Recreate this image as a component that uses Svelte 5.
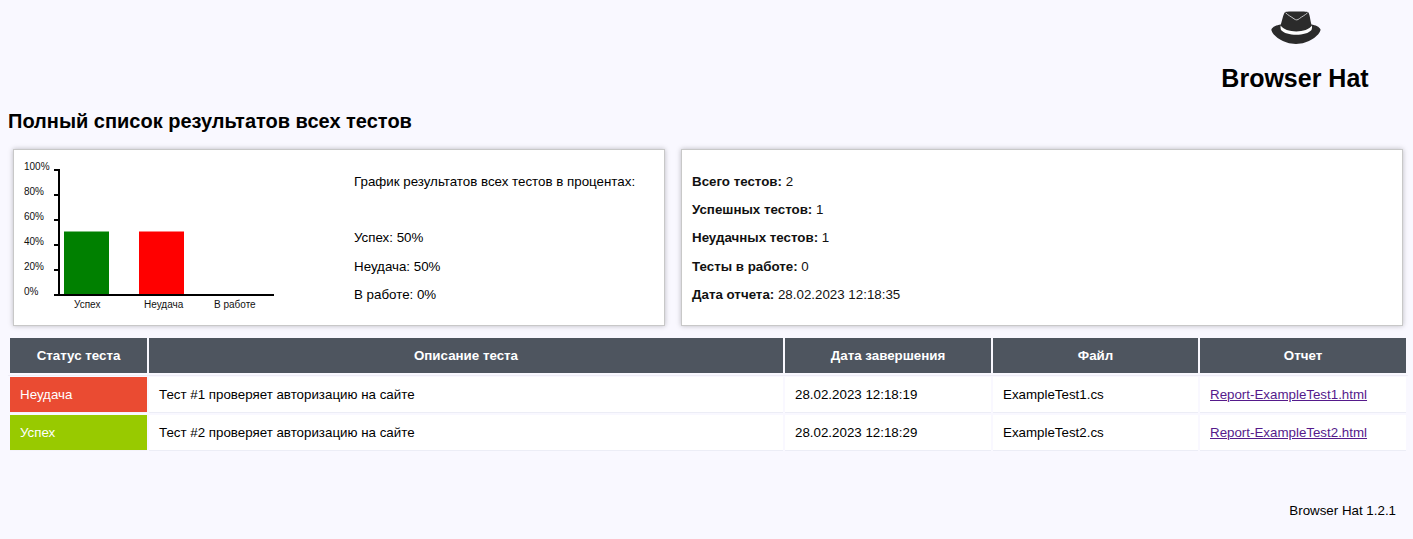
<script>
  const ticks = [100, 80, 60, 40, 20, 0];
  const bars = [
    { label: 'Успех', x: 50, tx: 60, value: 50, color: 'green' },
    { label: 'Неудача', x: 125, tx: 130, value: 50, color: 'red' },
    { label: 'В работе', x: 200, tx: 200, value: 0, color: 'gray' }
  ];
  const summary = [
    ['Всего тестов:', '2'],
    ['Успешных тестов:', '1'],
    ['Неудачных тестов:', '1'],
    ['Тесты в работе:', '0'],
    ['Дата отчета:', '28.02.2023 12:18:35']
  ];
  const columns = ['Статус теста', 'Описание теста', 'Дата завершения', 'Файл', 'Отчет'];
  const rows = [
    { ok: false, status: 'Неудача', text: 'Тест #1 проверяет авторизацию на сайте', date: '28.02.2023 12:18:19', file: 'ExampleTest1.cs', report: 'Report-ExampleTest1.html' },
    { ok: true, status: 'Успех', text: 'Тест #2 проверяет авторизацию на сайте', date: '28.02.2023 12:18:29', file: 'ExampleTest2.cs', report: 'Report-ExampleTest2.html' }
  ];
</script>

<div class="page">
  <header>
    <svg class="hat" width="50" height="34" viewBox="0 0 50 34">
      <path fill="#2b2b2b" d="M14 1.2C15.5 .2 20 .5 25.5 .5S35 .2 37.2 1.2C38.8 3 39 8 40.4 13.6C44.5 14.2 48.4 15.8 49.6 18.7C48.5 24.5 37.5 32.9 25 32.9C12.5 32.9 1.3 24.5 .3 18.7C1.6 15.8 5.5 14.2 9.8 13.6C11.6 8 12.2 3 14 1.2Z" />
      <path fill="#fff" d="M9.6 14.6C14.5 22.4 36 22.4 41 14.6C41.2 16.5 40.9 18 40.5 19C35.5 25.3 15 25.3 10 19C9.6 18 9.4 16.5 9.6 14.6Z" />
      <path fill="none" stroke="#c4c4c6" stroke-width="1" d="M14.6 1.8C17 4.3 20.5 5.8 23 7.8C25 9.3 26.5 9.3 28.5 7.5C30.5 5.8 34 4.3 36.6 1.8" />
    </svg>
    <h1>Browser Hat</h1>
  </header>

  <h2>Полный список результатов всех тестов</h2>

  <div class="panels">
    <section class="panel chart-panel">
      <svg class="chart" width="330" height="155" viewBox="0 0 330 155">
        {#each ticks as t, i}
          <text x="10" y={20 + i * 25}>{t}%</text>
          <rect x="40" y={19 + i * 25} width="5" height="2" />
        {/each}
        {#each bars as b}
          {#if b.value}
            <rect x={b.x} y="81.5" width="45" height="63" fill={b.color} />
          {/if}
          <text x={b.tx} y="158">{b.label}</text>
        {/each}
        <rect x="44" y="19" width="2" height="127" />
        <rect x="40" y="144" width="220" height="2" />
      </svg>
      <div class="legend">
        <p>График результатов всех тестов в процентах:</p>
        <p>&nbsp;</p>
        <p>Успех: 50%</p>
        <p>Неудача: 50%</p>
        <p>В работе: 0%</p>
      </div>
    </section>
    <section class="panel summary">
      {#each summary as [k, v]}
        <p><b>{k}</b> {v}</p>
      {/each}
    </section>
  </div>

  <div class="table">
    <div class="row head">
      {#each columns as c}<div>{c}</div>{/each}
    </div>
    {#each rows as r}
      <div class="row">
        <div class="status" class:ok={r.ok}>{r.status}</div>
        <div>{r.text}</div>
        <div>{r.date}</div>
        <div>{r.file}</div>
        <div><a href="#report">{r.report}</a></div>
      </div>
    {/each}
  </div>

  <footer>Browser Hat 1.2.1</footer>
</div>

<style>
  :global(body) { background: #f9f8ff; }
  .page {
    box-sizing: border-box;
    height: 539px;
    overflow: hidden;
    padding: 0 5px 0 8px;
    background: #f9f8ff;
    color: #000;
    font: 13.333px/15px "Liberation Sans", Arial, sans-serif;
  }
  header {
    width: 160px;
    height: 108px;
    margin-left: auto;
    margin-right: 33px;
    padding-top: 11px;
    box-sizing: border-box;
    text-align: center;
  }
  .hat { display: block; margin: 0 auto 0 56px; }
  h1 { margin: 18px 0 0; font-size: 25px; line-height: 30px; white-space: nowrap; }
  h2 { margin: 0; height: 41px; font-size: 20px; line-height: 26px; white-space: nowrap; }
  .panels { display: grid; grid-template-columns: 652px 722px; gap: 16px; padding-left: 5px; }
  .panel {
    box-sizing: border-box;
    height: 177px;
    border: 1px solid #c8c8c8;
    background: #fff;
    box-shadow: 0 0 5px rgba(0, 0, 0, 0.25);
  }
  .chart-panel { display: flex; }
  .chart { display: block; flex: none; overflow: visible; }
  .chart text { font-size: 10px; fill: #111; }
  .legend { padding: 23.7px 0 0 10px; }
  .summary { padding: 23.7px 10px 0; color: #111; }
  p { margin: 0 0 13.333px; white-space: nowrap; }
  .table { padding: 12px 0 0 2px; }
  .row {
    display: grid;
    grid-template-columns: 137px 634px 206px 205px 206px;
    gap: 2px;
    height: 36px;
    margin-bottom: 2px;
  }
  .row > div {
    box-sizing: border-box;
    padding: 10px;
    background: #fff;
    border-bottom: 1px solid #ecedf6;
    white-space: nowrap;
  }
  .row.head { height: 35px; margin: 0 0 4px -2px; padding: 0 2px; position: relative; }
  .row.head::after { content: ""; position: absolute; left: 0; width: 1400px; top: 37px; height: 1px; background: #eeedf6; }
  .row.head > div { background: #4e555f; color: #fff; font-weight: bold; text-align: center; border: 0; }
  .row > .status { background: #ea4b32; color: #fff; border-bottom-color: #f4f3fb; background-clip: padding-box; }
  .row > .status.ok { background-color: #98ca00; }
  a { color: #551a8b; }
  footer { margin-top: 52px; padding-right: 12px; text-align: right; }
</style>
